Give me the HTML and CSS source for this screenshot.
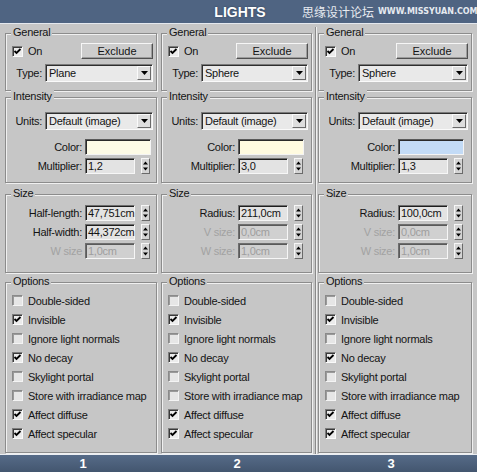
FILE: index.html
```html
<!DOCTYPE html>
<html>
<head>
<meta charset="utf-8">
<link rel="stylesheet" href="styles.css">
</head>
<body>
<div class="titlebar">
  <span class="title">LIGHTS</span>
  <div class="watermark"><span class="wm-cn">思缘设计论坛</span><span class="wm-url">WWW.MISSYUAN.COM</span></div>
</div>
<div class="panel">
  <!-- Column 1 -->
  <div class="col c1">
    <div class="group g-general">
      <span class="legend">General</span>
      <div class="row r16">
        <span class="check"><svg viewBox="0 0 9 9" width="9" height="9"><path d="M1.5 4 L3.5 6 L7.5 2" fill="none" stroke="#000" stroke-width="1.8"/></svg></span><span class="cb-text">On</span>
        <span class="btn">Exclude</span>
      </div>
      <div class="row r18 mt5">
        <span class="lab-s">Type:</span>
        <span class="dd"><span class="dd-text">Plane</span><span class="dd-btn"><svg viewBox="0 0 7 4" width="7" height="4"><path d="M0 0H7L3.5 4Z"/></svg></span></span>
      </div>
    </div>
    <div class="group g-int">
      <span class="legend">Intensity</span>
      <div class="row r18">
        <span class="lab-s">Units:</span>
        <span class="dd"><span class="dd-text">Default (image)</span><span class="dd-btn"><svg viewBox="0 0 7 4" width="7" height="4"><path d="M0 0H7L3.5 4Z"/></svg></span></span>
      </div>
      <div class="row r16 mt9">
        <span class="lab-l">Color:</span><span class="swatch cream"></span>
      </div>
      <div class="row r16 mt3">
        <span class="lab-l">Multiplier:</span><span class="field">1,2</span>
        <svg class="spin" viewBox="0 0 7 14"><path d="M1 5.5 L3.5 2.5 L6 5.5Z M1 8.5 L3.5 11.5 L6 8.5Z"/></svg>
      </div>
    </div>
    <div class="group g-size">
      <span class="legend">Size</span>
      <div class="row r16">
        <span class="lab-l">Half-length:</span><span class="field">47,751cm</span>
        <svg class="spin" viewBox="0 0 7 14"><path d="M1 5.5 L3.5 2.5 L6 5.5Z M1 8.5 L3.5 11.5 L6 8.5Z"/></svg>
      </div>
      <div class="row r16 mt3">
        <span class="lab-l">Half-width:</span><span class="field">44,372cm</span>
        <svg class="spin" viewBox="0 0 7 14"><path d="M1 5.5 L3.5 2.5 L6 5.5Z M1 8.5 L3.5 11.5 L6 8.5Z"/></svg>
      </div>
      <div class="row r16 mt3">
        <span class="lab-l dis">W size</span><span class="field field-dis">1,0cm</span>
        <svg class="spin" viewBox="0 0 7 14"><path d="M1 5.5 L3.5 2.5 L6 5.5Z M1 8.5 L3.5 11.5 L6 8.5Z"/></svg>
      </div>
    </div>
    <div class="group g-opt">
      <span class="legend">Options</span>
      <div class="row r19"><span class="check off"></span><span class="cb-text">Double-sided</span></div>
      <div class="row r19"><span class="check"><svg viewBox="0 0 9 9" width="9" height="9"><path d="M1.5 4 L3.5 6 L7.5 2" fill="none" stroke="#000" stroke-width="1.8"/></svg></span><span class="cb-text">Invisible</span></div>
      <div class="row r19"><span class="check off"></span><span class="cb-text">Ignore light normals</span></div>
      <div class="row r19"><span class="check"><svg viewBox="0 0 9 9" width="9" height="9"><path d="M1.5 4 L3.5 6 L7.5 2" fill="none" stroke="#000" stroke-width="1.8"/></svg></span><span class="cb-text">No decay</span></div>
      <div class="row r19"><span class="check off"></span><span class="cb-text">Skylight portal</span></div>
      <div class="row r19"><span class="check off"></span><span class="cb-text">Store with irradiance map</span></div>
      <div class="row r19"><span class="check"><svg viewBox="0 0 9 9" width="9" height="9"><path d="M1.5 4 L3.5 6 L7.5 2" fill="none" stroke="#000" stroke-width="1.8"/></svg></span><span class="cb-text">Affect diffuse</span></div>
      <div class="row r19"><span class="check"><svg viewBox="0 0 9 9" width="9" height="9"><path d="M1.5 4 L3.5 6 L7.5 2" fill="none" stroke="#000" stroke-width="1.8"/></svg></span><span class="cb-text">Affect specular</span></div>
    </div>
  </div>

  <!-- Column 2 -->
  <div class="col c2">
    <div class="group g-general">
      <span class="legend">General</span>
      <div class="row r16">
        <span class="check"><svg viewBox="0 0 9 9" width="9" height="9"><path d="M1.5 4 L3.5 6 L7.5 2" fill="none" stroke="#000" stroke-width="1.8"/></svg></span><span class="cb-text">On</span>
        <span class="btn">Exclude</span>
      </div>
      <div class="row r18 mt5">
        <span class="lab-s">Type:</span>
        <span class="dd"><span class="dd-text">Sphere</span><span class="dd-btn"><svg viewBox="0 0 7 4" width="7" height="4"><path d="M0 0H7L3.5 4Z"/></svg></span></span>
      </div>
    </div>
    <div class="group g-int">
      <span class="legend">Intensity</span>
      <div class="row r18">
        <span class="lab-s">Units:</span>
        <span class="dd"><span class="dd-text">Default (image)</span><span class="dd-btn"><svg viewBox="0 0 7 4" width="7" height="4"><path d="M0 0H7L3.5 4Z"/></svg></span></span>
      </div>
      <div class="row r16 mt9">
        <span class="lab-l">Color:</span><span class="swatch cream2"></span>
      </div>
      <div class="row r16 mt3">
        <span class="lab-l">Multiplier:</span><span class="field">3,0</span>
        <svg class="spin" viewBox="0 0 7 14"><path d="M1 5.5 L3.5 2.5 L6 5.5Z M1 8.5 L3.5 11.5 L6 8.5Z"/></svg>
      </div>
    </div>
    <div class="group g-size">
      <span class="legend">Size</span>
      <div class="row r16">
        <span class="lab-l">Radius:</span><span class="field">211,0cm</span>
        <svg class="spin" viewBox="0 0 7 14"><path d="M1 5.5 L3.5 2.5 L6 5.5Z M1 8.5 L3.5 11.5 L6 8.5Z"/></svg>
      </div>
      <div class="row r16 mt3">
        <span class="lab-l dis">V size:</span><span class="field field-dis">0,0cm</span>
        <svg class="spin" viewBox="0 0 7 14"><path d="M1 5.5 L3.5 2.5 L6 5.5Z M1 8.5 L3.5 11.5 L6 8.5Z"/></svg>
      </div>
      <div class="row r16 mt3">
        <span class="lab-l dis">W size:</span><span class="field field-dis">1,0cm</span>
        <svg class="spin" viewBox="0 0 7 14"><path d="M1 5.5 L3.5 2.5 L6 5.5Z M1 8.5 L3.5 11.5 L6 8.5Z"/></svg>
      </div>
    </div>
    <div class="group g-opt">
      <span class="legend">Options</span>
      <div class="row r19"><span class="check off"></span><span class="cb-text">Double-sided</span></div>
      <div class="row r19"><span class="check"><svg viewBox="0 0 9 9" width="9" height="9"><path d="M1.5 4 L3.5 6 L7.5 2" fill="none" stroke="#000" stroke-width="1.8"/></svg></span><span class="cb-text">Invisible</span></div>
      <div class="row r19"><span class="check off"></span><span class="cb-text">Ignore light normals</span></div>
      <div class="row r19"><span class="check"><svg viewBox="0 0 9 9" width="9" height="9"><path d="M1.5 4 L3.5 6 L7.5 2" fill="none" stroke="#000" stroke-width="1.8"/></svg></span><span class="cb-text">No decay</span></div>
      <div class="row r19"><span class="check off"></span><span class="cb-text">Skylight portal</span></div>
      <div class="row r19"><span class="check off"></span><span class="cb-text">Store with irradiance map</span></div>
      <div class="row r19"><span class="check"><svg viewBox="0 0 9 9" width="9" height="9"><path d="M1.5 4 L3.5 6 L7.5 2" fill="none" stroke="#000" stroke-width="1.8"/></svg></span><span class="cb-text">Affect diffuse</span></div>
      <div class="row r19"><span class="check"><svg viewBox="0 0 9 9" width="9" height="9"><path d="M1.5 4 L3.5 6 L7.5 2" fill="none" stroke="#000" stroke-width="1.8"/></svg></span><span class="cb-text">Affect specular</span></div>
    </div>
  </div>

  <div class="sep"></div>

  <!-- Column 3 -->
  <div class="col c3">
    <div class="group g-general">
      <span class="legend">General</span>
      <div class="row r16">
        <span class="check"><svg viewBox="0 0 9 9" width="9" height="9"><path d="M1.5 4 L3.5 6 L7.5 2" fill="none" stroke="#000" stroke-width="1.8"/></svg></span><span class="cb-text">On</span>
        <span class="btn">Exclude</span>
      </div>
      <div class="row r18 mt5">
        <span class="lab-s">Type:</span>
        <span class="dd"><span class="dd-text">Sphere</span><span class="dd-btn"><svg viewBox="0 0 7 4" width="7" height="4"><path d="M0 0H7L3.5 4Z"/></svg></span></span>
      </div>
    </div>
    <div class="group g-int">
      <span class="legend">Intensity</span>
      <div class="row r18">
        <span class="lab-s">Units:</span>
        <span class="dd"><span class="dd-text">Default (image)</span><span class="dd-btn"><svg viewBox="0 0 7 4" width="7" height="4"><path d="M0 0H7L3.5 4Z"/></svg></span></span>
      </div>
      <div class="row r16 mt9">
        <span class="lab-l">Color:</span><span class="swatch blue"></span>
      </div>
      <div class="row r16 mt3">
        <span class="lab-l">Multiplier:</span><span class="field">1,3</span>
        <svg class="spin" viewBox="0 0 7 14"><path d="M1 5.5 L3.5 2.5 L6 5.5Z M1 8.5 L3.5 11.5 L6 8.5Z"/></svg>
      </div>
    </div>
    <div class="group g-size">
      <span class="legend">Size</span>
      <div class="row r16">
        <span class="lab-l">Radius:</span><span class="field">100,0cm</span>
        <svg class="spin" viewBox="0 0 7 14"><path d="M1 5.5 L3.5 2.5 L6 5.5Z M1 8.5 L3.5 11.5 L6 8.5Z"/></svg>
      </div>
      <div class="row r16 mt3">
        <span class="lab-l dis">V size:</span><span class="field field-dis">0,0cm</span>
        <svg class="spin" viewBox="0 0 7 14"><path d="M1 5.5 L3.5 2.5 L6 5.5Z M1 8.5 L3.5 11.5 L6 8.5Z"/></svg>
      </div>
      <div class="row r16 mt3">
        <span class="lab-l dis">W size:</span><span class="field field-dis">1,0cm</span>
        <svg class="spin" viewBox="0 0 7 14"><path d="M1 5.5 L3.5 2.5 L6 5.5Z M1 8.5 L3.5 11.5 L6 8.5Z"/></svg>
      </div>
    </div>
    <div class="group g-opt">
      <span class="legend">Options</span>
      <div class="row r19"><span class="check off"></span><span class="cb-text">Double-sided</span></div>
      <div class="row r19"><span class="check"><svg viewBox="0 0 9 9" width="9" height="9"><path d="M1.5 4 L3.5 6 L7.5 2" fill="none" stroke="#000" stroke-width="1.8"/></svg></span><span class="cb-text">Invisible</span></div>
      <div class="row r19"><span class="check off"></span><span class="cb-text">Ignore light normals</span></div>
      <div class="row r19"><span class="check"><svg viewBox="0 0 9 9" width="9" height="9"><path d="M1.5 4 L3.5 6 L7.5 2" fill="none" stroke="#000" stroke-width="1.8"/></svg></span><span class="cb-text">No decay</span></div>
      <div class="row r19"><span class="check off"></span><span class="cb-text">Skylight portal</span></div>
      <div class="row r19"><span class="check off"></span><span class="cb-text">Store with irradiance map</span></div>
      <div class="row r19"><span class="check"><svg viewBox="0 0 9 9" width="9" height="9"><path d="M1.5 4 L3.5 6 L7.5 2" fill="none" stroke="#000" stroke-width="1.8"/></svg></span><span class="cb-text">Affect diffuse</span></div>
      <div class="row r19"><span class="check"><svg viewBox="0 0 9 9" width="9" height="9"><path d="M1.5 4 L3.5 6 L7.5 2" fill="none" stroke="#000" stroke-width="1.8"/></svg></span><span class="cb-text">Affect specular</span></div>
    </div>
  </div>
</div>
<div class="footer">
  <span class="num">1</span><span class="num">2</span><span class="num">3</span>
</div>
</body>
</html>
```

FILE: styles.css
```css
* { box-sizing: border-box; }
html, body { margin: 0; padding: 0; }
body {
  width: 477px;
  height: 472px;
  overflow: hidden;
  background: #c6c6c6;
  font-family: "Liberation Sans", Arial, sans-serif;
  font-size: 11px;
  letter-spacing: -0.25px;
  color: #141414;
}

/* title bar */
.titlebar {
  position: relative;
  height: 24px;
  background: #4f6482;
  border-bottom: 1px solid #e4e8ee;
  display: flex;
  align-items: center;
  justify-content: center;
}
.title {
  color: #fff;
  font-weight: bold;
  font-size: 14px;
  letter-spacing: 0;
  margin-left: 3px;
  text-shadow: 0 0 2px #2c3a50;
}
.watermark {
  position: absolute;
  left: 302px;
  top: 4px;
  width: 175px;
  display: flex;
  align-items: center;
  gap: 4px;
  white-space: nowrap;
  color: #e6eaf0;
}
.wm-cn {
  flex: none;
  font-family: "Noto Sans CJK SC", sans-serif;
  font-size: 12px;
  line-height: 15px;
  letter-spacing: 0;
}
.wm-url {
  flex: none;
  font-family: "DejaVu Sans", sans-serif;
  font-weight: bold;
  font-size: 8px;
  letter-spacing: 0;
}

/* panel */
.panel {
  display: flex;
  height: 430px;
  padding-left: 5px;
}
.col {
  display: flex;
  flex-direction: column;
  padding-top: 9px;
  --lw: 70px;
}
.c1 { width: 152px; }
.c2 { width: 151px; margin-left: 4px; --lw: 67px; }
.sep {
  width: 2px;
  margin-left: 3px;
  margin-top: 3px;
  border-left: 1px solid #8a8a8a;
  border-right: 1px solid #f0f0f0;
}
.c3 { width: 154px; margin-left: 1px; }

/* group boxes */
.group {
  position: relative;
  border: 1px solid #8c8c8c;
  box-shadow: inset 1px 1px 0 #f0f0f0, 1px 1px 0 #f0f0f0;
  padding: 0 3px 0 6px;
  display: flex;
  flex-direction: column;
}
.legend {
  position: absolute;
  top: -8px;
  left: 5px;
  padding: 0 2px;
  line-height: 13px;
  background: #c6c6c6;
}
.g-general { height: 58px; padding-top: 9px; }
.g-int { height: 86px; padding-top: 14px; margin-top: 6px; }
.g-size { height: 79px; padding-top: 10px; margin-top: 11px; }
.g-opt { height: 171px; padding-top: 8px; margin-top: 9px; }

.row { display: flex; align-items: center; }
.r16 { height: 16px; }
.r18 { height: 18px; }
.r19 { height: 19px; }
.mt3 { margin-top: 3px; }
.mt5 { margin-top: 5px; }
.mt9 { margin-top: 9px; }

.lab-s { width: 30px; margin-right: 3px; text-align: right; white-space: nowrap; }
.lab-l { width: var(--lw); margin-right: 3px; text-align: right; white-space: nowrap; }
.dis { color: #a2a2a2; }

/* checkbox */
.check {
  flex: none;
  width: 11px;
  height: 11px;
  border: 1px solid;
  border-color: #7c7c7c #fafafa #fafafa #7c7c7c;
  box-shadow: inset 1px 1px 0 #3a3a3a;
  background: #ececec;
  display: flex;
}
.check.off {
  background: #e6e6e6;
  box-shadow: inset 1px 1px 0 #9a9a9a;
  border-color: #8a8a8a #f4f4f4 #f4f4f4 #8a8a8a;
}
.cb-text { margin-left: 5px; white-space: nowrap; }

/* button */
.btn {
  margin-left: auto;
  width: 72px;
  height: 16px;
  border: 1px solid;
  border-color: #f6f6f6 #505050 #505050 #f6f6f6;
  box-shadow: inset -1px -1px 0 #9c9c9c;
  background: #cdcdcd;
  display: flex;
  align-items: center;
  justify-content: center;
  letter-spacing: 0;
}

/* dropdown */
.dd {
  flex: 1;
  height: 18px;
  display: flex;
  align-items: center;
  border: 1px solid;
  border-color: #7a7a7a #fafafa #fafafa #7a7a7a;
  box-shadow: inset 1px 1px 0 #2e2e2e;
  background: #e9e9e9;
  padding-left: 3px;
}
.dd-text { flex: 1; white-space: nowrap; overflow: hidden; }
.dd-btn {
  width: 14px;
  height: 14px;
  margin-right: 1px;
  border: 1px solid;
  border-color: #fafafa #6a6a6a #6a6a6a #fafafa;
  background: #dedede;
  display: flex;
  align-items: center;
  justify-content: center;
}
.dd-btn svg { fill: #000; }

/* colour swatches */
.swatch {
  width: 66px;
  height: 16px;
  border: 1px solid;
  border-color: #5a5a5a #f4f4f4 #f4f4f4 #5a5a5a;
  box-shadow: inset 1px 1px 0 #2a2a2a;
}
.cream { background: #fdfbe6; }
.cream2 { background: #fffbe0; }
.blue { background: #c3dbf6; }

/* numeric fields */
.field {
  width: 50px;
  height: 16px;
  border: 1px solid;
  border-color: #6e6e6e #f6f6f6 #f6f6f6 #6e6e6e;
  box-shadow: inset 1px 1px 0 #1e1e1e;
  background: #e3e3e3;
  padding-left: 2px;
  display: flex;
  align-items: center;
  white-space: nowrap;
}
.field-dis {
  background: #d0d0d0;
  color: #9e9e9e;
  box-shadow: inset 1px 1px 0 #5a5a5a;
}
.spin {
  width: 9px;
  height: 16px;
  margin-left: 6px;
  border: 1px solid;
  border-color: #f6f6f6 #6a6a6a #6a6a6a #f6f6f6;
  background: #d4d4d4;
  fill: #000;
}

/* footer */
.footer {
  height: 18px;
  border-top: 1px solid #eceef2;
  background: linear-gradient(#566b88, #43566f);
  display: grid;
  grid-template-columns: 154px 154px 154px;
  padding-left: 6px;
  align-items: center;
}
.num {
  text-align: center;
  color: #fff;
  font-weight: bold;
  font-size: 13px;
  letter-spacing: 0;
  line-height: 17px;
}
```
